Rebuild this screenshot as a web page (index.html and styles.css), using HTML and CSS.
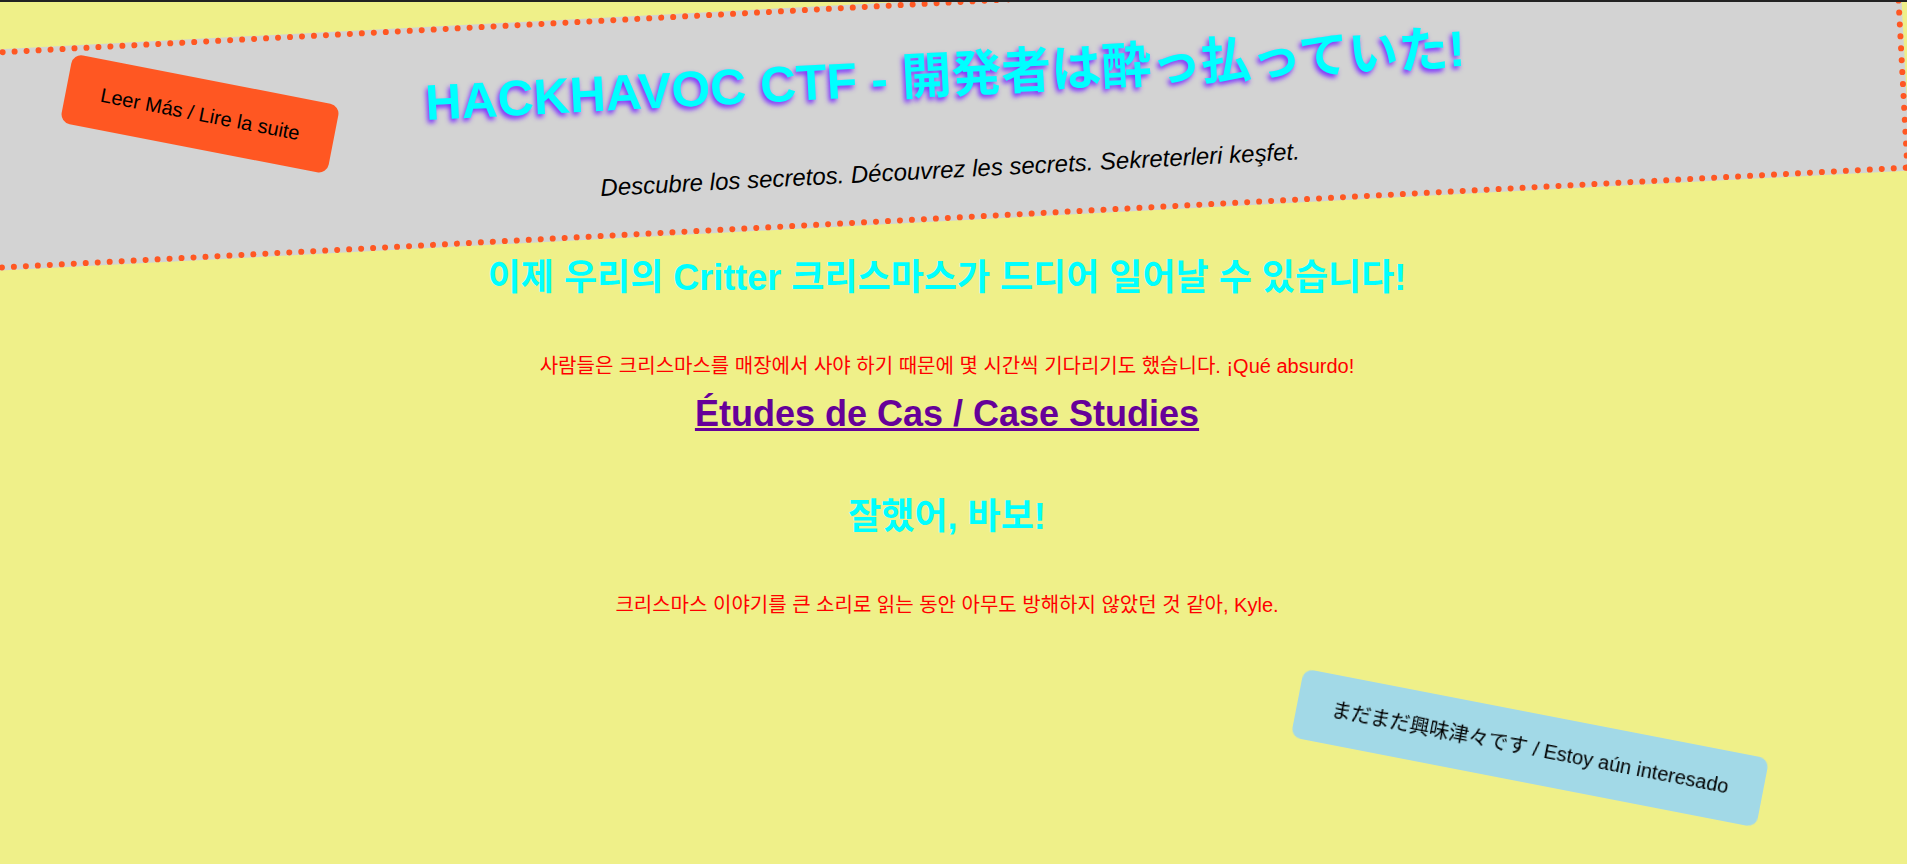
FILE: index.html
```html
<!DOCTYPE html>
<html lang="ko">
<head>
<meta charset="utf-8">
<title>HACKHAVOC CTF</title>
<link rel="stylesheet" href="styles.css">
</head>
<body>
<div class="topline"></div>
<header class="banner">
  <h1 class="title" lang="ja">HACKHAVOC CTF - 開発者は酔っ払っていた!</h1>
  <p class="tagline">Descubre los secretos. Découvrez les secrets. Sekreterleri keşfet.</p>
</header>
<a class="btn btn-read" href="#">Leer Más / Lire la suite</a>
<main class="content">
  <h2 class="headline">이제 우리의 Critter 크리스마스가 드디어 일어날 수 있습니다!</h2>
  <p class="note">사람들은 크리스마스를 매장에서 사야 하기 때문에 몇 시간씩 기다리기도 했습니다. ¡Qué absurdo!</p>
  <a class="case-link" href="#">Études de Cas / Case Studies</a>
  <h2 class="headline">잘했어, 바보!</h2>
  <p class="note">크리스마스 이야기를 큰 소리로 읽는 동안 아무도 방해하지 않았던 것 같아, Kyle.</p>
</main>
<a class="btn btn-more" href="#" lang="ja">まだまだ興味津々です / Estoy aún interesado</a>
</body>
</html>
```
FILE: styles.css
```css
html {
  background: #eff089;
}

body {
  margin: 0;
  min-height: 864px;
  overflow: hidden;
  background: #eff089;
  font-family: "Liberation Sans", Arial, "Noto Sans CJK KR", sans-serif;
  font-size: 20px;
}

.topline {
  position: fixed;
  top: 0;
  left: 0;
  right: 0;
  height: 2px;
  background: #222;
  z-index: 10;
}

.banner {
  box-sizing: border-box;
  width: 1926px;
  height: 221px;
  margin-left: -20px;
  padding-left: 8px;
  display: flow-root;
  background: #d3d3d3;
  border: 6px dotted #ff5722;
  transform: rotate(-3deg);
  text-align: center;
}

.title {
  margin: 29px 0 0;
  font-family: "Liberation Sans", Arial, "Noto Sans CJK JP", sans-serif;
  font-size: 50px;
  font-weight: bold;
  color: #00ffff;
  text-shadow: -2px 3px 5px #7a2cff;
}

.tagline {
  margin: 49px 0 0;
  font-size: 24px;
  font-style: italic;
  color: #000;
}

.content {
  display: flex;
  flex-direction: column;
  align-items: center;
  margin-top: -3px;
  padding-right: 13px;
  text-align: center;
}

.headline {
  margin: 30px 0;
  font-size: 36px;
  font-weight: bold;
  color: #00ffff;
}

.note {
  margin: 20px 0;
  font-size: 20px;
  color: #ff0000;
}

.case-link {
  margin: -6px 0 22px;
  font-size: 36px;
  font-weight: bold;
  color: #660099;
  text-decoration: underline;
}

.btn {
  position: absolute;
  padding: 22px 35px;
  line-height: 26px;
  font-size: 20px;
  color: #000;
  text-decoration: none;
  white-space: nowrap;
  border-radius: 10px;
  transform: rotate(11deg);
}

.btn-read {
  left: 64px;
  top: 79px;
  background: #ff5722;
}

.btn-more {
  position: fixed;
  right: 140px;
  bottom: 81px;
  font-family: "Liberation Sans", Arial, "Noto Sans CJK JP", sans-serif;
  background: #a2d9e7;
}
```
